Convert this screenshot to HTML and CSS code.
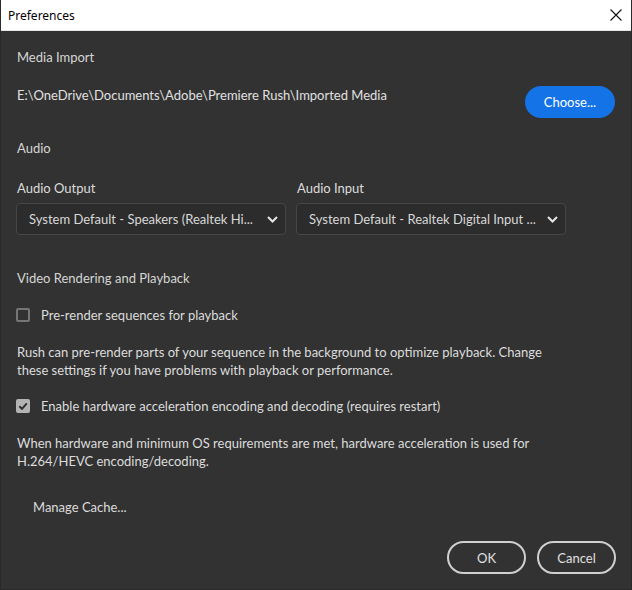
FILE: index.html
```html
<!DOCTYPE html>
<html lang="en">
<head>
  <meta charset="UTF-8" />
  <title>Preferences</title>
  <link rel="stylesheet" href="styles.css">
</head>
<body>

  <div class="window">

    <!-- title bar -->
    <header class="titlebar">
      <span class="title">Preferences</span>
      <svg class="close" width="12" height="12" viewBox="0 0 12 12">
        <path d="M0.5 0.5 L11.5 11.5 M11.5 0.5 L0.5 11.5" stroke="#111" stroke-width="1.1" fill="none" />
      </svg>
    </header>

    <main class="content">

      <!-- Media Import -->
      <h2 class="heading first">Media Import</h2>
      <div class="path-row">
        <span class="path">E:\OneDrive\Documents\Adobe\Premiere Rush\Imported Media</span>
        <button class="btn-primary">Choose...</button>
      </div>

      <!-- Audio -->
      <h2 class="heading audio">Audio</h2>
      <div class="audio-grid">
        <div class="field">
          <label>Audio Output</label>
          <div class="dropdown">
            <span class="dropdown-text">System Default - Speakers (Realtek Hi...</span>
            <svg class="chevron" width="11" height="7" viewBox="0 0 11 7">
              <path d="M1 1 L5.5 5.5 L10 1" stroke="#e6e6e6" stroke-width="2" fill="none" />
            </svg>
          </div>
        </div>
        <div class="field">
          <label>Audio Input</label>
          <div class="dropdown">
            <span class="dropdown-text">System Default - Realtek Digital Input ...</span>
            <svg class="chevron" width="11" height="7" viewBox="0 0 11 7">
              <path d="M1 1 L5.5 5.5 L10 1" stroke="#e6e6e6" stroke-width="2" fill="none" />
            </svg>
          </div>
        </div>
      </div>

      <!-- Video Rendering -->
      <h2 class="heading video">Video Rendering and Playback</h2>
      <div class="check-row prerender">
        <span class="checkbox"></span>
        <span>Pre-render sequences for playback</span>
      </div>
      <p class="note">Rush can pre-render parts of your sequence in the background to optimize playback. Change these settings if you have problems with playback or performance.</p>
      <div class="check-row hwaccel">
        <span class="checkbox checked">
          <svg width="14" height="14" viewBox="0 0 14 14">
            <path d="M3.3 7.2 L6 9.8 L10.8 4.3" stroke="#2e2e2e" stroke-width="2" fill="none" />
          </svg>
        </span>
        <span>Enable hardware acceleration encoding and decoding (requires restart)</span>
      </div>
      <p class="note">When hardware and minimum OS requirements are met, hardware acceleration is used for H.264/HEVC encoding/decoding.</p>

      <button class="btn-link">Manage Cache...</button>
    </main>

    <footer class="actions">
      <button class="btn-outline">OK</button>
      <button class="btn-outline">Cancel</button>
    </footer>

  </div>

</body>
</html>
```

FILE: styles.css
```css
/* Reset */
* {
  box-sizing: border-box;
}
body {
  margin: 0;
  background: #323232;
  font-family: "Lato", "Noto Sans", sans-serif;
}

.window {
  width: 632px;
  height: 590px;
  display: flex;
  flex-direction: column;
  background: #323232;
  border: 1px solid #2a2a2a;
  border-top: none;
}

/* Title bar */
.titlebar {
  height: 31px;
  flex-shrink: 0;
  background: #fff;
  display: flex;
  align-items: center;
  justify-content: space-between;
  padding: 0 9px 0 7px;
  border-bottom: 1px solid #e6e6e6;
}
.title {
  font-family: "Noto Sans", sans-serif;
  font-size: 12px;
  color: #000;
}

/* Body */
.content {
  flex-grow: 1;
  padding: 0 16px 0 15px;
  color: #dcdcdc;
  font-size: 13px;
  line-height: 18px;
}

.heading {
  margin: 0;
  padding-left: 1px;
  font-size: 13px;
  font-weight: normal;
  line-height: 18px;
  color: #d6d6d6;
}
.heading.first { margin-top: 17px; }
.heading.audio { margin-top: 21px; }
.heading.video { margin-top: 34px; }

.path-row {
  margin-top: 20px;
  display: flex;
  justify-content: space-between;
  align-items: flex-start;
}
.path {
  color: #e0e0e0;
  padding-left: 1px;
}

button {
  font-family: inherit;
  font-size: 13px;
  cursor: pointer;
}

.btn-primary {
  width: 90px;
  height: 32px;
  border: none;
  border-radius: 16px;
  background: #1473e6;
  color: #fff;
}

/* Audio */
.audio-grid {
  margin-top: 22px;
  display: grid;
  grid-template-columns: 270px 270px;
  column-gap: 10px;
}
.field label {
  display: block;
  color: #dcdcdc;
  margin-bottom: 6px;
  padding-left: 1px;
}
.dropdown {
  height: 32px;
  display: flex;
  align-items: center;
  justify-content: space-between;
  padding: 0 7px 0 12px;
  background: #2c2c2c;
  border: 1px solid #464646;
  border-radius: 4px;
  color: #d8d8d8;
}

/* Checkboxes */
.check-row {
  display: flex;
  align-items: center;
  gap: 11px;
}
.check-row.prerender { margin-top: 19px; }
.check-row.hwaccel { margin-top: 18px; }

.checkbox {
  width: 14px;
  height: 14px;
  border: 2px solid #757575;
  border-radius: 2px;
  display: inline-flex;
  align-items: center;
  justify-content: center;
  flex-shrink: 0;
}
.checkbox.checked {
  border: none;
  background: #b3b3b3;
}

.note {
  margin: 19px 0 0 0;
  padding: 0 70px 0 1px;
  color: #dcdcdc;
}

.btn-link {
  margin: 28px 0 0 17px;
  padding: 0;
  border: none;
  background: none;
  color: #dcdcdc;
  line-height: 18px;
}

/* Footer */
.actions {
  display: flex;
  justify-content: flex-end;
  gap: 11px;
  padding: 0 15px 15px 0;
}
.btn-outline {
  width: 79px;
  height: 33px;
  border: 2px solid #d0d0d0;
  border-radius: 17px;
  background: transparent;
  color: #e0e0e0;
}
```
